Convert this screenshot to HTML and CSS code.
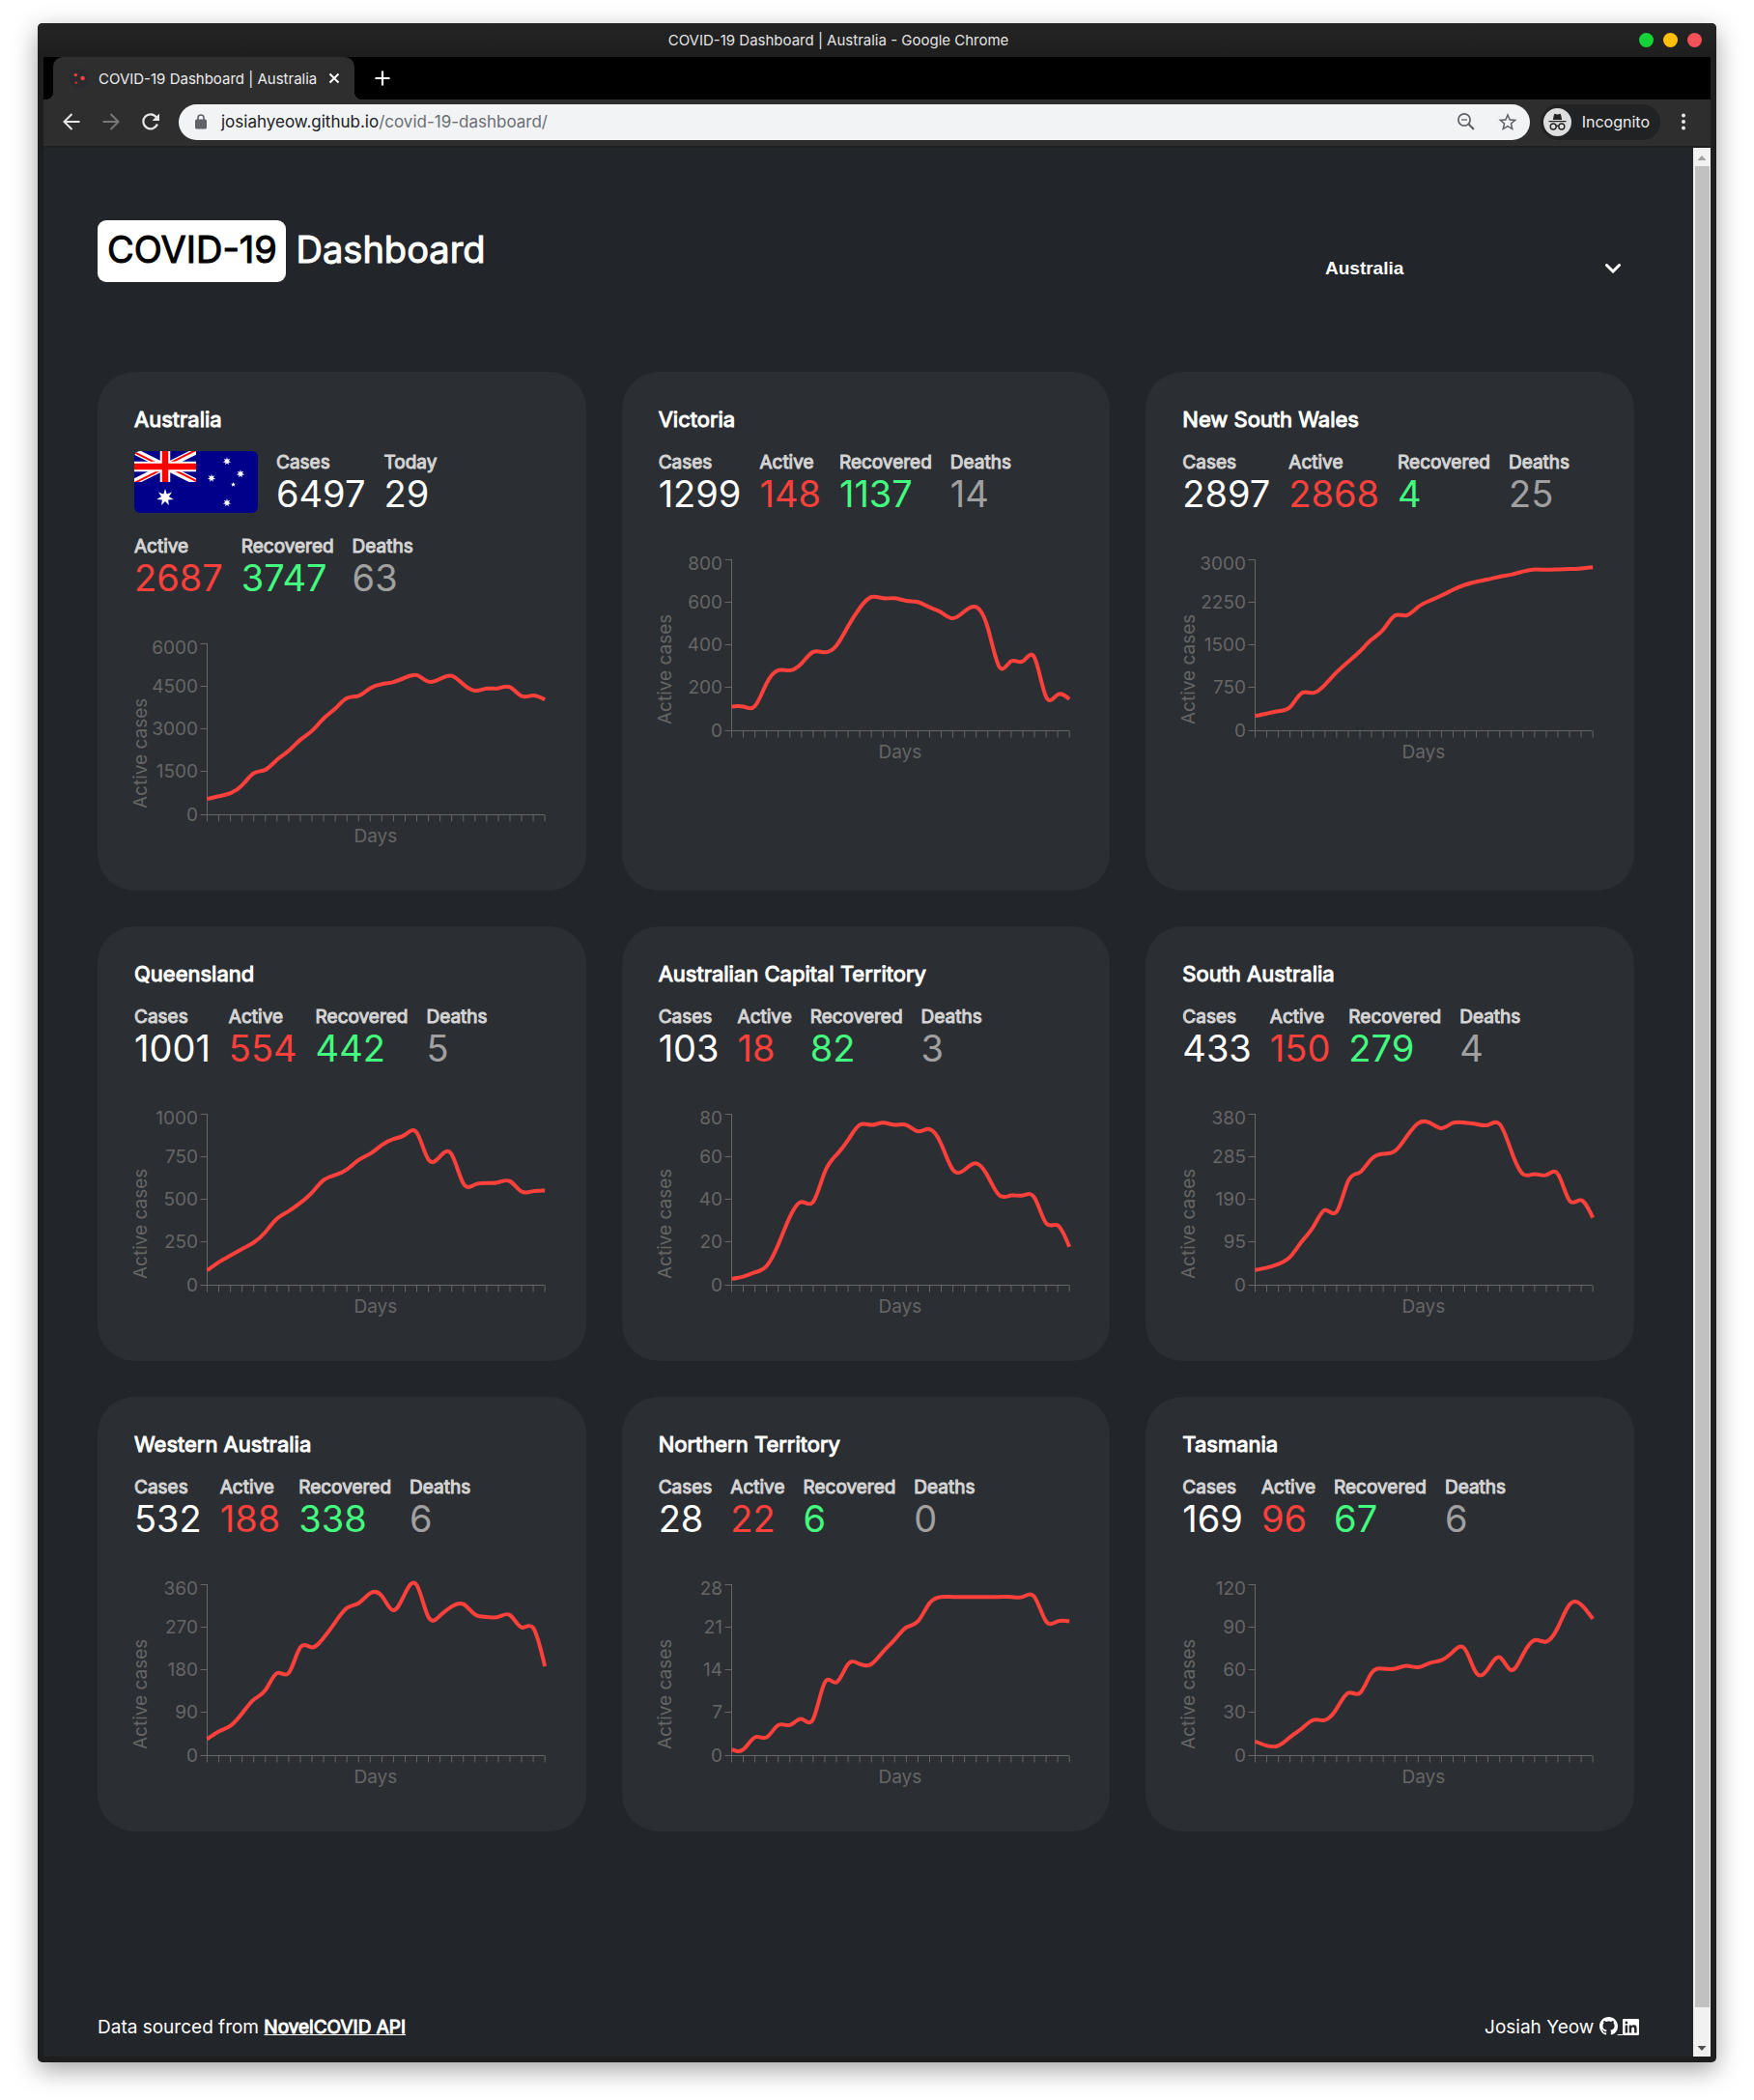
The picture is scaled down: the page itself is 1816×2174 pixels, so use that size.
FILE: index.html
```html
<!DOCTYPE html>
<html lang="en">
<head>
<meta charset="utf-8">
<meta name="viewport" content="width=device-width, initial-scale=1">
<title>COVID-19 Dashboard | Australia</title>
<link rel="stylesheet" href="styles.css">
</head>
<body>
<div class="window">
  <div class="titlebar">
    <p class="titlebar-text">COVID-19 Dashboard | Australia - Google Chrome</p>
    <div class="window-buttons">
      <button class="dot dot-green" aria-label="Minimize"></button>
      <button class="dot dot-yellow" aria-label="Maximize"></button>
      <button class="dot dot-red" aria-label="Close window"></button>
    </div>
  </div>

  <div class="tabstrip">
    <div class="tab">
      <svg class="favicon" viewBox="0 0 20 20" aria-hidden="true"><circle cx="10" cy="10" r="10" fill="#292b2f"/><circle cx="6.3" cy="6.6" r="1.7" fill="#ff403b"/><circle cx="13.6" cy="10" r="2.2" fill="#ff403b"/><circle cx="6.8" cy="14.6" r="1.2" fill="#d93a38"/></svg>
      <span class="tab-title">COVID-19 Dashboard | Australia</span>
      <button class="tab-close" aria-label="Close tab"><svg width="12" height="12" viewBox="0 0 12 12"><path d="M1.500 1.500 10.500 10.500M10.500 1.500 1.500 10.500" stroke="#fff" stroke-width="2"/></svg></button>
    </div>
    <button class="new-tab" aria-label="New tab"><svg width="16" height="16" viewBox="0 0 16 16"><path d="M8 0.500V15.500M0.500 8H15.500" stroke="#fff" stroke-width="2.200"/></svg></button>
  </div>

  <div class="toolbar">
    <div class="nav-buttons">
      <button aria-label="Back"><svg width="18" height="18" viewBox="0 0 18 18" fill="none" stroke="#e6e6e6" stroke-width="2"><path d="M17.500 9H2M9.500 1 1.500 9l8 8"/></svg></button>
      <button aria-label="Forward"><svg width="18" height="18" viewBox="0 0 18 18" fill="none" stroke="#777" stroke-width="2"><path d="M.5 9H16M8.500 1l8 8-8 8"/></svg></button>
      <button aria-label="Reload"><svg width="18" height="18" viewBox="0 0 18 18"><path d="M15.900 11.500A7.500 7.500 0 1 1 14.800 4.200" fill="none" stroke="#e6e6e6" stroke-width="2.200"/><path d="M18 .5V8H10.500z" fill="#e6e6e6"/></svg></button>
    </div>
    <div class="omnibox">
      <svg width="12" height="16" viewBox="0 0 12 16" aria-hidden="true"><rect x="0" y="5.500" width="12" height="10" rx="1.500" fill="#5f6368"/><path d="M3 6V4a3 3 0 0 1 6 0V6" fill="none" stroke="#5f6368" stroke-width="1.600"/></svg>
      <div class="url" role="textbox" aria-label="Address">josiahyeow.github.io<span>/covid-19-dashboard/</span></div>
      <button aria-label="Zoom"><svg width="18" height="18" viewBox="0 0 18 18" fill="none" stroke="#5f6368"><circle cx="7" cy="7" r="6.100" stroke-width="1.700"/><path d="M4 7h6" stroke-width="1.300"/><path d="M11.300 11.300l5.600 5.600" stroke-width="2.200"/></svg></button>
      <button aria-label="Bookmark"><svg width="20" height="20" viewBox="1.500 1 21 21" fill="#5f6368"><path d="M22 9.240l-7.190-.62L12 2 9.190 8.630 2 9.240l5.460 4.730L5.820 21 12 17.270 18.180 21l-1.630-7.030L22 9.240zM12 15.400l-3.760 2.270 1-4.280-3.320-2.880 4.380-.38L12 6.100l1.710 4.040 4.380.38-3.320 2.880 1 4.280L12 15.400z"/></svg></button>
    </div>
    <button class="incognito">
      <svg width="29" height="29" viewBox="0 0 29 29" aria-hidden="true"><circle cx="14.500" cy="14.500" r="14.500" fill="#dedede"/><path d="M9.800 12 11 6.600q.3-1 1.300-.7l2.200.6 2.200-.6q1-.3 1.300.7L19.200 12z" fill="#222"/><path d="M5.500 13.600h18" stroke="#222" stroke-width="1.200"/><g fill="none" stroke="#222" stroke-width="1.400"><circle cx="10.200" cy="19" r="3"/><circle cx="18.800" cy="19" r="3"/><path d="M13.200 18.600q1.300-.8 2.600 0"/></g></svg>
      Incognito
    </button>
    <button class="menu" aria-label="Menu"><svg width="6" height="18" viewBox="0 0 6 18" fill="#e6e6e6"><circle cx="3" cy="2.500" r="2"/><circle cx="3" cy="9" r="2"/><circle cx="3" cy="15.500" r="2"/></svg></button>
  </div>

  <div class="viewport">
    <div class="page">
      <header class="header">
        <h1><span class="badge">COVID-19</span> Dashboard</h1>
        <div class="country">
          <select aria-label="Country">
            <option>Australia</option>
            <option>Canada</option>
            <option>New Zealand</option>
            <option>United Kingdom</option>
          </select>
          <svg class="chevron" width="16" height="10" viewBox="0 0 16 10" aria-hidden="true"><path d="M1.500 1.500 8 8l6.500-6.500" fill="none" stroke="#fff" stroke-width="3" stroke-linecap="round"/></svg>
        </div>
      </header>

      <main class="grid">
        <section class="card">
          <h2>Australia</h2>
          <dl class="stats">
            <div class="stat flag">
              <svg viewBox="0 0 256 128" role="img" aria-label="Flag of Australia">
                <defs>
                  <path id="star7" d="M0-10 1.930-4 7.820-6.230 4.330-.99 9.750 2.230 3.470 2.770 4.340 9.010 0 4.440-4.340 9.010-3.470 2.770-9.750 2.230-4.330-.99-7.820-6.230-1.930-4z"/>
                  <clipPath id="canton"><path d="M0 0h128v64H0z"/></clipPath>
                  <clipPath id="saltire"><path d="M64 32h64v32zM64 32v32H0zM64 32H0V0zM64 32V0h64z"/></clipPath>
                </defs>
                <path fill="#00008b" d="M0 0h256v128H0z"/>
                <g clip-path="url(#canton)">
                  <path d="M0 0 128 64M128 0 0 64" stroke="#fff" stroke-width="13"/>
                  <path d="M0 0 128 64M128 0 0 64" stroke="#f00" stroke-width="8" clip-path="url(#saltire)"/>
                  <path d="M64 0v64M0 32h128" stroke="#fff" stroke-width="21"/>
                  <path d="M64 0v64M0 32h128" stroke="#f00" stroke-width="13"/>
                </g>
                <g fill="#fff">
                  <use href="#star7" transform="translate(64 96) scale(1.800)"/>
                  <use href="#star7" transform="translate(192 21) scale(.85)"/>
                  <use href="#star7" transform="translate(220 47) scale(.85)"/>
                  <use href="#star7" transform="translate(160 56) scale(.85)"/>
                  <use href="#star7" transform="translate(192 107) scale(.85)"/>
                  <path d="M205 64l1.300 3.400 3.600.2-2.800 2.300.9 3.500-3-2-3 2 .9-3.500-2.800-2.300 3.600-.2z"/>
                </g>
              </svg>
            </div>
            <div class="stat"><dt>Cases</dt><dd>6497</dd></div>
            <div class="stat"><dt>Today</dt><dd>29</dd></div>
            <div class="stat active"><dt>Active</dt><dd>2687</dd></div>
            <div class="stat recovered"><dt>Recovered</dt><dd>3747</dd></div>
            <div class="stat deaths"><dt>Deaths</dt><dd>63</dd></div>
          </dl>
          <svg class="chart" data-max="6000" data-values="555,652,760,1038,1460,1581,1931,2245,2631,2945,3380,3730,4092,4176,4442,4587,4659,4816,4900,4671,4768,4876,4575,4357,4430,4442,4478,4164,4188,4043"></svg>
        </section>

        <section class="card">
          <h2>Victoria</h2>
          <dl class="stats">
            <div class="stat"><dt>Cases</dt><dd>1299</dd></div>
            <div class="stat active"><dt>Active</dt><dd>148</dd></div>
            <div class="stat recovered"><dt>Recovered</dt><dd>1137</dd></div>
            <div class="stat deaths"><dt>Deaths</dt><dd>14</dd></div>
          </dl>
          <svg class="chart" data-max="800" data-values="113,113,116,222,283,283,315,369,367,399,489,574,626,620,620,608,602,578,554,526,559,579,481,298,325,325,343,159,169,148"></svg>
        </section>

        <section class="card">
          <h2>New South Wales</h2>
          <dl class="stats">
            <div class="stat"><dt>Cases</dt><dd>2897</dd></div>
            <div class="stat active"><dt>Active</dt><dd>2868</dd></div>
            <div class="stat recovered"><dt>Recovered</dt><dd>4</dd></div>
            <div class="stat deaths"><dt>Deaths</dt><dd>25</dd></div>
          </dl>
          <svg class="chart" data-max="3000" data-values="260,302,344,416,660,664,809,1026,1213,1394,1600,1775,2022,2024,2173,2282,2372,2475,2559,2614,2656,2704,2740,2795,2831,2825,2831,2837,2849,2867"></svg>
        </section>

        <section class="card">
          <h2>Queensland</h2>
          <dl class="stats">
            <div class="stat"><dt>Cases</dt><dd>1001</dd></div>
            <div class="stat active"><dt>Active</dt><dd>554</dd></div>
            <div class="stat recovered"><dt>Recovered</dt><dd>442</dd></div>
            <div class="stat deaths"><dt>Deaths</dt><dd>5</dd></div>
          </dl>
          <svg class="chart" data-max="1000" data-values="86,135,174,212,250,311,390,433,482,542,615,645,677,732,769,820,855,880,892,735,754,764,595,589,597,602,608,548,550,554"></svg>
        </section>

        <section class="card">
          <h2>Australian Capital Territory</h2>
          <dl class="stats">
            <div class="stat"><dt>Cases</dt><dd>103</dd></div>
            <div class="stat active"><dt>Active</dt><dd>18</dd></div>
            <div class="stat recovered"><dt>Recovered</dt><dd>82</dd></div>
            <div class="stat deaths"><dt>Deaths</dt><dd>3</dd></div>
          </dl>
          <svg class="chart" data-max="80" data-values="3,4,6,9,19,32,39,39,53,61,68,75,75,76,75,75,72,73,66,54,54,57,51,42,42,42,41,29,28,18"></svg>
        </section>

        <section class="card">
          <h2>South Australia</h2>
          <dl class="stats">
            <div class="stat"><dt>Cases</dt><dd>433</dd></div>
            <div class="stat active"><dt>Active</dt><dd>150</dd></div>
            <div class="stat recovered"><dt>Recovered</dt><dd>279</dd></div>
            <div class="stat deaths"><dt>Deaths</dt><dd>4</dd></div>
          </dl>
          <svg class="chart" data-max="380" data-values="34,39,47,63,97,130,167,163,232,251,281,292,298,330,360,361,349,361,361,358,356,358,298,247,247,245,247,188,189,150"></svg>
        </section>

        <section class="card">
          <h2>Western Australia</h2>
          <dl class="stats">
            <div class="stat"><dt>Cases</dt><dd>532</dd></div>
            <div class="stat active"><dt>Active</dt><dd>188</dd></div>
            <div class="stat recovered"><dt>Recovered</dt><dd>338</dd></div>
            <div class="stat deaths"><dt>Deaths</dt><dd>6</dd></div>
          </dl>
          <svg class="chart" data-max="360" data-values="35,51,63,89,118,138,174,174,228,228,248,281,311,321,342,336,306,342,359,292,295,314,319,297,292,292,296,270,269,188"></svg>
        </section>

        <section class="card">
          <h2>Northern Territory</h2>
          <dl class="stats">
            <div class="stat"><dt>Cases</dt><dd>28</dd></div>
            <div class="stat active"><dt>Active</dt><dd>22</dd></div>
            <div class="stat recovered"><dt>Recovered</dt><dd>6</dd></div>
            <div class="stat deaths"><dt>Deaths</dt><dd>0</dd></div>
          </dl>
          <svg class="chart" data-max="28" data-values="1,1,3,3,5,5,6,6,12,12,15,15,15,17,19,21,22,25,26,26,26,26,26,26,26,26,26,22,22,22"></svg>
        </section>

        <section class="card">
          <h2>Tasmania</h2>
          <dl class="stats">
            <div class="stat"><dt>Cases</dt><dd>169</dd></div>
            <div class="stat active"><dt>Active</dt><dd>96</dd></div>
            <div class="stat recovered"><dt>Recovered</dt><dd>67</dd></div>
            <div class="stat deaths"><dt>Deaths</dt><dd>6</dd></div>
          </dl>
          <svg class="chart" data-max="120" data-values="10,7,7,13,19,25,25,33,44,44,58,61,61,63,62,65,67,73,75,58,61,69,60,71,81,80,90,106,106,96"></svg>
        </section>
      </main>

      <footer class="footer">
        <p>Data sourced from <a class="api-link" href="https://github.com/NovelCOVID/API">NovelCOVID API</a></p>
        <p>Josiah Yeow <a href="https://github.com/josiahyeow" aria-label="GitHub"><svg width="19" height="19" viewBox="0 0 16 16" fill="#fff"><path d="M8 0C3.580 0 0 3.580 0 8c0 3.540 2.290 6.530 5.470 7.590.4.07.55-.17.55-.38 0-.19-.01-.82-.01-1.490-2.010.37-2.530-.49-2.690-.94-.09-.23-.48-.94-.82-1.130-.28-.15-.68-.52-.01-.53.63-.01 1.080.58 1.230.82.72 1.210 1.870.87 2.330.66.07-.52.28-.87.51-1.070-1.780-.2-3.640-.89-3.640-3.950 0-.87.31-1.590.82-2.150-.08-.2-.36-1.020.08-2.120 0 0 .67-.21 2.200.82.64-.18 1.320-.27 2-.27.68 0 1.360.09 2 .27 1.530-1.040 2.200-.82 2.200-.82.44 1.100.16 1.920.08 2.120.51.56.82 1.270.82 2.150 0 3.070-1.870 3.750-3.650 3.950.29.25.54.73.54 1.480 0 1.070-.01 1.930-.01 2.200 0 .21.15.46.55.38A8.013 8.013 0 0 0 16 8c0-4.420-3.580-8-8-8z"/></svg>&nbsp;</a><a href="https://www.linkedin.com/in/josiahyeow" aria-label="LinkedIn"><svg width="17" height="17" viewBox="0 32 448 448" fill="#fff"><path d="M416 32H31.900C14.300 32 0 46.500 0 64.300v383.400C0 465.500 14.300 480 31.900 480H416c17.600 0 32-14.500 32-32.300V64.300c0-17.800-14.400-32.300-32-32.300zM135.400 416H69V202.200h66.500V416zm-33.200-243c-21.300 0-38.500-17.300-38.500-38.500S80.900 96 102.200 96c21.200 0 38.500 17.300 38.500 38.500 0 21.300-17.200 38.500-38.500 38.500zm282.100 243h-66.400V312c0-24.800-.5-56.700-34.500-56.700-34.600 0-39.900 27-39.900 54.900V416h-66.400V202.200h63.700v29.200h.9c8.900-16.800 30.600-34.500 62.900-34.500 67.200 0 79.700 44.300 79.700 101.900V416z"/></svg></a></p>
      </footer>
    </div>

    <div class="scrollbar" aria-hidden="true">
      <svg width="18" height="19" viewBox="0 0 18 19"><path d="M4.500 13 9 8l4.500 5z" fill="#a0a0a0"/></svg>
      <div class="thumb"></div>
      <svg width="18" height="19" viewBox="0 0 18 19"><path d="M4.500 8 9 13l4.500-5z" fill="#505050"/></svg>
    </div>
  </div>
</div>
<script src="script.js"></script>
</body>
</html>
```
FILE: styles.css
```css
* {
  box-sizing: border-box;
}

body {
  margin: 0;
  min-height: 100vh;
  padding: 24px 39px 39px;
  display: flex;
  background: #fff;
  color: #fff;
  font-family: Inter, "Liberation Sans", sans-serif;
}

h1, h2, p, dl, dd {
  margin: 0;
}

button {
  padding: 0;
  border: 0;
  background: none;
  color: inherit;
  font: inherit;
}

svg {
  display: block;
}

/* Browser window */
.window {
  flex: 1;
  min-width: 0;
  display: flex;
  flex-direction: column;
  padding: 0 6px 6px;
  border-radius: 5px;
  background: #1e1e1e;
  box-shadow: 0 8px 26px rgba(0, 0, 0, 0.36);
}

.titlebar {
  display: flex;
  align-items: center;
  height: 35px;
  margin: 0 -6px;
  padding-right: 15px;
  border-radius: 5px 5px 0 0;
  background: linear-gradient(#242424, #1e1e1e);
}

.titlebar-text {
  flex: 1;
  color: #e4e4e4;
  font-size: 15px;
  line-height: 20px;
  text-align: center;
}

.window-buttons {
  display: flex;
  gap: 10px;
}

.dot {
  width: 15px;
  height: 15px;
  border-radius: 50%;
}

.dot-green { background: #14d437; }
.dot-yellow { background: #ffbf0a; }
.dot-red { background: #f65058; }

.tabstrip {
  display: flex;
  height: 44px;
  padding-left: 10px;
  background: #000;
}

.tab {
  position: relative;
  display: flex;
  align-items: center;
  width: 312px;
  padding: 0 15px 0 17px;
  border-radius: 10px 10px 0 0;
  background: #2e2e2e;
}

/* Flared feet where the tab meets the toolbar */
.tab::before,
.tab::after {
  content: "";
  position: absolute;
  bottom: 0;
  width: 8px;
  height: 8px;
}

.tab::before {
  right: 100%;
  background: radial-gradient(circle at 0 0, transparent 8px, #2e2e2e 8px);
}

.tab::after {
  left: 100%;
  background: radial-gradient(circle at 100% 0, transparent 8px, #2e2e2e 8px);
}

.favicon {
  width: 20px;
  height: 20px;
  margin-right: 10px;
}

.tab-title {
  flex: 1;
  color: #ececec;
  font-size: 15px;
  white-space: nowrap;
}

.new-tab {
  margin-left: 21px;
}

.toolbar {
  display: flex;
  align-items: center;
  height: 50px;
  padding: 0 25px 2px 20px;
  border-bottom: 2px solid #1f1f1f;
  background: #2e2e2e;
}

.nav-buttons {
  display: flex;
  gap: 23px;
}

.omnibox {
  flex: 1;
  display: flex;
  align-items: center;
  gap: 24px;
  height: 37px;
  margin-left: 20px;
  padding: 0 13px 0 17px;
  border-radius: 19px;
  background: #f1f3f5;
}

.url {
  flex: 1;
  margin-left: -9px;
  color: #202124;
  font-size: 17px;
}

.url span {
  color: #6b6e73;
}

.incognito {
  display: flex;
  align-items: center;
  gap: 11px;
  height: 37px;
  margin: 0 21px 0 11px;
  padding: 0 11px 0 3px;
  border-radius: 19px;
  background: #202224;
  color: #ececec;
  font-size: 16px;
}

/* Page area */
.viewport {
  flex: 1;
  display: flex;
  background: #22252a;
}

.page {
  flex: 1;
  min-width: 0;
  display: flex;
  flex-direction: column;
  padding: 75px 56px 18px;
}

.scrollbar {
  display: flex;
  flex-direction: column;
  width: 18px;
  background: #f1f1f1;
}

.thumb {
  flex: 1;
  margin: 0 1px 32px 2px;
  background: #c1c1c1;
}

.header {
  display: flex;
  justify-content: space-between;
  align-items: flex-start;
  margin-bottom: 84px;
}

/* Headings and labels are the regular cut, thickened by a thin outline */
h1,
h2,
.stat dt,
.api-link {
  font-weight: 400;
  -webkit-text-stroke: 1px currentColor;
}

h1 {
  font-size: 38px;
  line-height: 48px;
}

.badge {
  display: inline-block;
  padding: 6px 9px 10px 10px;
  border-radius: 9px;
  background: #fff;
  color: #000;
}

.country {
  position: relative;
  width: 344px;
  margin-top: 26px;
}

.country select {
  width: 100%;
  height: 47px;
  padding: 0 19px;
  border: 0;
  border-radius: 9px;
  appearance: none;
  background: #22252a;
  color: #fff;
  font: bold 19px "Liberation Sans", sans-serif;
}

.chevron {
  position: absolute;
  top: 19px;
  right: 19px;
  pointer-events: none;
}

/* Cards */
.grid {
  flex: 1;
  display: grid;
  grid-template-columns: repeat(3, minmax(0, 1fr));
  align-content: start;
  gap: 37px;
  margin-right: 5px;
}

.card {
  padding: 38px;
  border-radius: 38px;
  background: #2b2e33;
}

h2 {
  margin-bottom: 21px;
  font-size: 22px;
  line-height: 23px;
}

.stats {
  display: flex;
  flex-wrap: wrap;
}

.stat {
  margin: 0 19px 20px 0;
}

.stat dt {
  color: #d4d4d4;
  font-size: 19px;
  line-height: 23px;
}

.stat dd {
  font-size: 38px;
  line-height: 43px;
  padding-bottom: 1px;
}

.flag svg {
  width: 128px;
  height: 64px;
  border-radius: 6px;
}

.active dd { color: #ff403b; }
.recovered dd { color: #42fb7f; }
.deaths dd { color: #a0a0a0; }

/* Charts */
.chart {
  width: 100%;
  height: 225px;
  margin-top: 18px;
  overflow: visible;
}

.chart .axis {
  fill: none;
  stroke: #666;
  stroke-width: 1;
}

.chart text {
  fill: #666;
  font-size: 19px;
}

.chart .tick {
  text-anchor: end;
}

.chart .days {
  text-anchor: middle;
}

.chart .line {
  fill: none;
  stroke: #ff403b;
  stroke-width: 4;
}

.footer {
  display: flex;
  justify-content: space-between;
  padding-top: 40px;
  font-size: 19px;
  line-height: 24px;
}

.footer a {
  color: #fff;
}

.footer svg {
  display: inline-block;
  vertical-align: -2px;
}

@media (max-width: 1300px) {
  .grid {
    grid-template-columns: repeat(2, minmax(0, 1fr));
  }
}

@media (max-width: 900px) {
  .grid {
    grid-template-columns: minmax(0, 1fr);
  }
}
```
FILE: script.js
```js
const SVG_NS = 'http://www.w3.org/2000/svg';
const PLOT = { left: 75, right: 5, top: 7, bottom: 184 };
const TICK = 7;

function add(svg, tag, attrs, text) {
  const el = document.createElementNS(SVG_NS, tag);
  for (const name in attrs) el.setAttribute(name, attrs[name]);
  if (text !== undefined) el.textContent = text;
  svg.appendChild(el);
}

// Control points of a natural cubic spline through evenly spaced values.
function controlPoints(v) {
  const n = v.length - 1;
  const a = new Array(n);
  const b = new Array(n);
  const r = new Array(n);
  a[0] = 0;
  b[0] = 2;
  r[0] = v[0] + 2 * v[1];
  for (let i = 1; i < n - 1; i++) {
    a[i] = 1;
    b[i] = 4;
    r[i] = 4 * v[i] + 2 * v[i + 1];
  }
  a[n - 1] = 2;
  b[n - 1] = 7;
  r[n - 1] = 8 * v[n - 1] + v[n];
  for (let i = 1; i < n; i++) {
    const m = a[i] / b[i - 1];
    b[i] -= m;
    r[i] -= m * r[i - 1];
  }
  a[n - 1] = r[n - 1] / b[n - 1];
  for (let i = n - 2; i >= 0; i--) a[i] = (r[i] - a[i + 1]) / b[i];
  b[n - 1] = (v[n] + a[n - 1]) / 2;
  for (let i = 0; i < n - 1; i++) b[i] = 2 * v[i + 1] - a[i + 1];
  return [a, b];
}

function draw(svg) {
  svg.replaceChildren();
  const max = Number(svg.dataset.max);
  const values = svg.dataset.values.split(',').map(Number);
  const right = svg.getBoundingClientRect().width - PLOT.right;
  const step = (right - PLOT.left) / (values.length - 1);
  const height = PLOT.bottom - PLOT.top;
  const base = PLOT.bottom + 0.5;
  const left = PLOT.left + 0.5;

  let axis = `M${left} ${PLOT.top}V${base}H${right}`;
  for (let i = 0; i < values.length; i++) {
    axis += `M${PLOT.left + 0.5 + i * step} ${base}v${TICK}`;
  }
  for (let i = 0; i <= 4; i++) {
    const y = Math.floor(PLOT.bottom - (height * i) / 4) + 0.5;
    axis += `M${left} ${y}h${-TICK}`;
    const baseline = i === 4 ? y + 10 : y + 6;
    add(svg, 'text', { class: 'tick', x: PLOT.left - 9, y: baseline }, (max * i) / 4);
  }
  add(svg, 'path', { class: 'axis', d: axis });
  add(svg, 'text', { class: 'days', x: (PLOT.left + right) / 2, y: PLOT.bottom + 29 }, 'Days');
  add(svg, 'text', { transform: `translate(13 ${PLOT.bottom - 6}) rotate(-90)` }, 'Active cases');

  const ys = values.map((v) => base - (v / max) * height);
  const [c1, c2] = controlPoints(ys);
  let line = `M${left} ${ys[0]}`;
  for (let i = 0; i < ys.length - 1; i++) {
    const x = left + i * step;
    line += `C${x + step / 3} ${c1[i]} ${x + (2 * step) / 3} ${c2[i]} ${x + step} ${ys[i + 1]}`;
  }
  add(svg, 'path', { class: 'line', d: line });
}

function drawAll() {
  document.querySelectorAll('.chart').forEach(draw);
}

drawAll();
window.addEventListener('resize', drawAll);
```
